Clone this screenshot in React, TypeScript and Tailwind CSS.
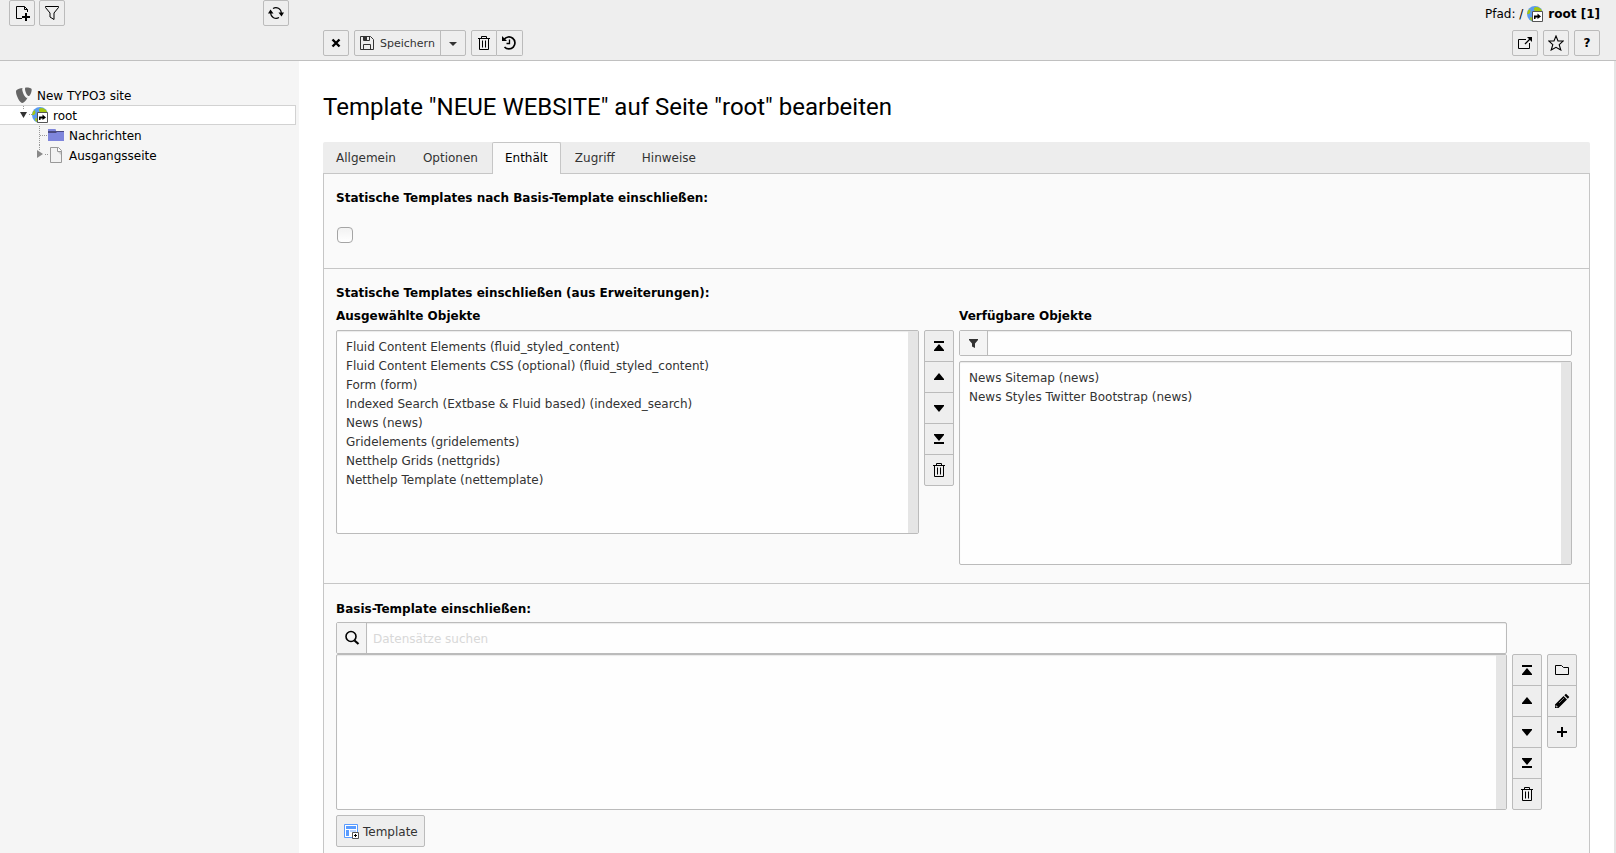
import type { ReactNode } from "react";

const P = ({ d, fill = "currentColor" }: { d: string; fill?: string }) => <path d={d} fill={fill} />;

function Svg({ children }: { children: ReactNode }) {
  return (
    <svg viewBox="0 0 16 16" className="size-4 shrink-0" aria-hidden="true">
      {children}
    </svg>
  );
}

const NewPageIcon = () => (
  <Svg>
    <path d="M8 13.500H2.500V1.500H10.500L13.500 4.500V7M10.500 1.500V4.500H13.500" fill="none" stroke="currentColor" />
    <P d="M11 8h2v3h3v2h-3v3h-2v-3H8v-2h3z" />
  </Svg>
);
const FunnelIcon = () => (
  <Svg>
    <path d="M1.500 1.500H14.500V2.500L10 8V14.500L6 12V8L1.500 2.500Z" fill="none" stroke="currentColor" />
  </Svg>
);
const RefreshIcon = () => (
  <Svg>
    <path d="M5 3.500A5.400 5.400 0 0 1 13.300 8M11 12.500A5.400 5.400 0 0 1 2.700 8" fill="none" stroke="currentColor" strokeWidth="1.100" />
    <P d="M0 8.500l2.500-4L5.500 8.500zM10.500 7.500h5.500L13.500 11.500z" />
  </Svg>
);
const CloseIcon = () => (
  <Svg>
    <path d="M4.500 4.500L11.500 11.500M11.500 4.500L4.500 11.500" stroke="currentColor" strokeWidth="2.400" />
  </Svg>
);
const SaveIcon = () => (
  <Svg>
    <path d="M1.500 1.500H11.500L14.500 4.500V14.500H1.500ZM4.500 1.500V5.500H10.500V1.500M4.500 14.500V9.500H11.500V14.500" fill="none" stroke="currentColor" />
    <P d="M5 2h3v3H5z" />
  </Svg>
);
const CaretIcon = () => (
  <Svg>
    <P d="M4 7h8l-4 4z" />
  </Svg>
);
const TrashIcon = () => (
  <Svg>
    <path d="M2 3.500H14M5.500 3V1.500H10.500V3M3.500 4V14.500H12.500V4M6.500 5.500V12.500M9.500 5.500V12.500" fill="none" stroke="currentColor" />
  </Svg>
);
const HistoryIcon = () => (
  <Svg>
    <path d="M3 4.500A6 6 0 1 1 3.500 12" fill="none" stroke="currentColor" strokeWidth="1.700" />
    <path d="M8.500 4.500V8.500H5.500" fill="none" stroke="currentColor" strokeWidth="1.300" />
    <P d="M1 1v5h5z" />
  </Svg>
);
const OpenIcon = () => (
  <Svg>
    <path d="M9 4.500H1.500V13.500H12.500V8" fill="none" stroke="currentColor" />
    <path d="M8 9L13 4" stroke="currentColor" strokeWidth="1.300" />
    <P d="M10 2h5v5z" />
  </Svg>
);
const StarIcon = () => (
  <Svg>
    <path d="M8 1L10 6H15.300L11.200 9.600L12.800 15L8 12.300L3.200 15L4.800 9.600L.7 6H6Z" fill="none" stroke="currentColor" strokeWidth="1.100" />
  </Svg>
);
const TopIcon = () => (
  <Svg>
    <P d="M3 3h10v2H3zM8 6l5 6v1H3v-1z" />
  </Svg>
);
const UpIcon = () => (
  <Svg>
    <P d="M8 4l5 6v1H3v-1z" />
  </Svg>
);
const DownIcon = () => (
  <Svg>
    <P d="M3 5h10v1l-5 6l-5-6z" />
  </Svg>
);
const BottomIcon = () => (
  <Svg>
    <P d="M3 3h10v1l-5 6l-5-6zM3 11h10v2H3z" />
  </Svg>
);
const FilterIcon = () => (
  <Svg>
    <P d="M3 4h9v1L9 8.500V13L6 11.500V8.500L3 5z" />
  </Svg>
);
const SearchIcon = () => (
  <Svg>
    <circle cx="7" cy="6.500" r="5" fill="none" stroke="currentColor" strokeWidth="1.600" />
    <path d="M10.500 10.500L14.500 14" stroke="currentColor" strokeWidth="2.200" />
  </Svg>
);
const FolderIcon = () => (
  <Svg>
    <path d="M1.500 12.500V3.500H7.500L9.500 5.500H14.500V12.500Z" fill="none" stroke="currentColor" />
  </Svg>
);
const PencilIcon = () => (
  <Svg>
    <P d="M1 15V11.500L9.500 3L13 6.500L4.500 15zM10.300 2.200L12 .7L15.300 4L13.800 5.700z" />
    <path d="M2 12.500L3.500 14H2zM5 10L10 5" fill="#fff" stroke="#999" strokeWidth=".8" />
  </Svg>
);
const PlusIcon = () => (
  <Svg>
    <P d="M7 3h2v4h4v2H9v4H7V9H3V7h4z" />
  </Svg>
);
const GlobeIcon = () => (
  <Svg>
    <circle cx="8" cy="8" r="8" fill="#5b9bee" />
    <P fill="#a5c610" d="M7 2C9 0 13 1 15 4.500L14 6H9L7 4zM0 8L1 4.500L3 3L3.500 6L2 8zM3 11l3 1v3.500L3.500 14z" />
    <path d="M5.500 5.500H15.500V15.500H5.500Z" fill="#fff" stroke="#555" />
    <P fill="#000" d="M7 13V9.500H10.500V7.500L14 10.500L10.500 13V11.500H8.500V13z" />
  </Svg>
);
const TypoIcon = () => (
  <Svg>
    <P fill="#666" d="M11.500 10.800c-.3.100-.5.100-.7.100C8.800 10.900 6.200 4.500 6.200 2.300c0-.8.200-1.100.5-1.300C4.300 1.300 1.400 2.200.4 3.300.2 3.600 0 4.100 0 4.700 0 8.200 3.700 16 6.500 16c1.200 0 3.300-2 5-5.200M10.200.6c2.500 0 5.500.4 5.500 1.900 0 3-1.900 6.600-2.900 6.600-1.700 0-3.800-4.700-3.800-7.100 0-1.100.4-1.400 1.200-1.400" />
  </Svg>
);
const BlueFolderIcon = () => (
  <Svg>
    <P fill="#4b4a80" d="M0 2h7l1 2h8v5H0z" />
    <P fill="#7f86dc" d="M0 2h7l1 1v1H0zM0 6h8l1-1h7v9H0z" />
  </Svg>
);
const PageIcon = () => (
  <Svg>
    <path d="M2.500 .5H10.500L13.500 3.500V15.500H2.500Z" fill="#f2f2f2" stroke="#999" />
    <path d="M9.500 4.500L13 8V4.500Z" fill="#ccc" />
    <path d="M9.500 .5V4.500H13.500" fill="#fff" stroke="#999" />
  </Svg>
);
const TemplateIcon = () => (
  <Svg>
    <path d="M1.500 1.500H14.500V14.500H1.500Z" fill="#fff" stroke="#599bff" />
    <P fill="#599bff" d="M3 3h10v3H3zM3 7h3v6H3z" />
    <P fill="#bcd6ff" d="M7 7h6v2H7z" />
    <path d="M9.500 9.500H15.500V15.500H9.500Z" fill="#fff" stroke="#555" />
    <P fill="#000" d="M12 11h1v1h1v1h-1v1h-1v-1h-1v-1h1z" />
  </Svg>
);

function ToolButton({ label, children, className = "rounded-xs" }: { label: string; children: ReactNode; className?: string }) {
  return (
    <button type="button" aria-label={label} className={`flex size-[26px] items-center justify-center border border-[#bbb] bg-[#eee] ${className}`}>
      {children}
    </button>
  );
}

function ButtonColumn({ items }: { items: [string, ReactNode][] }) {
  return (
    <div className="flex w-[30px] shrink-0 flex-col divide-y divide-[#bbb] rounded-xs border border-[#bbb] bg-[#eee]">
      {items.map(([label, icon]) => (
        <button key={label} type="button" aria-label={label} className="box-content flex h-[30px] items-center justify-center">
          {icon}
        </button>
      ))}
    </div>
  );
}

const moveItems: [string, ReactNode][] = [
  ["An den Anfang", <TopIcon />],
  ["Nach oben", <UpIcon />],
  ["Nach unten", <DownIcon />],
  ["Ans Ende", <BottomIcon />],
  ["Entfernen", <TrashIcon />],
];

function ListBox({ id, options, height, label }: { id: string; options: string[]; height: string; label?: string }) {
  return (
    <div className={`flex rounded-xs border border-[#bbb] bg-[#fefefe] shadow-[inset_0_1px_1px_rgba(0,0,0,0.08)] ${height}`}>
      <select id={id} aria-label={label} multiple className="min-w-0 flex-1 overflow-hidden bg-transparent px-[7px] pt-[9px] text-[#333] outline-none [scrollbar-width:none]">
        {options.map((o) => (
          <option key={o} className="h-[19px] min-h-0 px-[2px] py-0 leading-[19px]">
            {o}
          </option>
        ))}
      </select>
      <div className="w-[10px] bg-[#e5e5e5]" />
    </div>
  );
}

const selected = [
  "Fluid Content Elements (fluid_styled_content)",
  "Fluid Content Elements CSS (optional) (fluid_styled_content)",
  "Form (form)",
  "Indexed Search (Extbase & Fluid based) (indexed_search)",
  "News (news)",
  "Gridelements (gridelements)",
  "Netthelp Grids (nettgrids)",
  "Netthelp Template (nettemplate)",
];
const available = ["News Sitemap (news)", "News Styles Twitter Bootstrap (news)"];
const tabs = ["Allgemein", "Optionen", "Enthält", "Zugriff", "Hinweise"];

function Tree() {
  return (
    <nav aria-label="Seitenbaum" className="w-[299px] shrink-0 bg-[#f5f5f5] pt-6">
      <ul className="text-black">
        <li className="flex h-5 items-center gap-[5px] pl-4">
          <TypoIcon />
          <a href="#site" className="pt-[2px]">New TYPO3 site</a>
        </li>
        <li className="mr-[3px] flex h-5 items-center border-y border-r border-[#d2d2d2] bg-white pl-5">
          <svg viewBox="0 0 12 18" className="h-[18px] w-3 shrink-0" aria-hidden="true">
            <path d="M3.500 0V4M9 8.500H12" stroke="#999" strokeDasharray="1 1" />
            <path d="M0 6H7L3.500 12Z" fill="#333" />
          </svg>
          <GlobeIcon />
          <a href="#root" className="ml-[5px] pt-[2px]">root</a>
        </li>
        <li className="flex h-5 items-center pl-9">
          <svg viewBox="0 0 12 20" className="h-5 w-3 shrink-0" aria-hidden="true">
            <path d="M3.500 1V20M4 10.500H12" stroke="#999" strokeDasharray="1 1" />
          </svg>
          <BlueFolderIcon />
          <a href="#nachrichten" className="ml-[5px] pt-[2px]">Nachrichten</a>
        </li>
        <li className="flex h-5 items-center pl-9">
          <svg viewBox="0 0 12 20" className="h-5 w-3 shrink-0" aria-hidden="true">
            <path d="M3.500 0V5M9 9.500H12" stroke="#999" strokeDasharray="1 1" />
            <path d="M1 5V13L7 9Z" fill="#888" />
          </svg>
          <PageIcon />
          <a href="#ausgangsseite" className="ml-[5px] pt-[2px]">Ausgangsseite</a>
        </li>
      </ul>
    </nav>
  );
}

export default function App() {
  return (
    <div className="flex h-screen flex-col overflow-hidden bg-white font-['DejaVu_Sans',sans-serif] text-[12px] leading-[18px] text-black">
      <header className="flex h-[61px] shrink-0 border-b border-[#c0c0c0] bg-[#eee]">
        <div className="flex w-[299px] shrink-0 items-start gap-1 pr-[10px] pl-[9px]">
          <ToolButton label="Neue Seite"><NewPageIcon /></ToolButton>
          <ToolButton label="Filter"><FunnelIcon /></ToolButton>
          <ToolButton label="Neu laden" className="ml-auto rounded-xs"><RefreshIcon /></ToolButton>
        </div>
        <div className="flex flex-1 flex-col pr-4 pl-6">
          <div className="flex h-[30px] items-center justify-end pb-[2px]">
            <span>Pfad: /</span>
            <span className="mr-[5px] ml-1"><GlobeIcon /></span>
            <strong>root [1]</strong>
          </div>
          <div className="flex gap-[5px]">
            <ToolButton label="Schließen"><CloseIcon /></ToolButton>
            <div className="flex h-[26px] rounded-xs border border-[#bbb] text-[#333]">
              <button type="button" className="flex items-center gap-[5px] pr-[5px] pl-1 text-[11px]">
                <SaveIcon />
                <span className="pt-[2px]">Speichern</span>
              </button>
              <button type="button" aria-label="Weitere Optionen" className="flex w-[25px] items-center justify-center border-l border-[#bbb]">
                <CaretIcon />
              </button>
            </div>
            <div className="flex">
              <ToolButton label="Löschen" className="rounded-l-xs"><TrashIcon /></ToolButton>
              <ToolButton label="Verlauf" className="rounded-r-xs border-l-0"><HistoryIcon /></ToolButton>
            </div>
            <div className="ml-auto flex gap-[5px]">
              <ToolButton label="In neuem Fenster öffnen"><OpenIcon /></ToolButton>
              <ToolButton label="Lesezeichen"><StarIcon /></ToolButton>
              <ToolButton label="Hilfe"><span aria-hidden="true" className="font-bold">?</span></ToolButton>
            </div>
          </div>
        </div>
      </header>

      <div className="flex min-h-0 flex-1">
        <Tree />
        <main className="min-w-0 flex-1 overflow-y-auto border-r-2 border-[#e5e5e5] pt-[29px] pr-6 pl-6 [scrollbar-width:none]">
          <h1 className="mb-[18px] font-['Roboto',sans-serif] text-[24px] leading-[34px]">
            Template "NEUE WEBSITE" auf Seite "root" bearbeiten
          </h1>

          <div role="tablist" className="flex h-8 gap-px rounded-t-xs border-b border-[#c6c6c6] bg-[#ededed]">
            {tabs.map((t) => (
              <button
                key={t}
                type="button"
                role="tab"
                aria-selected={t === "Enthält"}
                className={
                  t === "Enthält"
                    ? "-mb-px rounded-t-xs border border-b-0 border-[#c6c6c6] bg-[#fafafa] px-3 pb-px"
                    : "border border-transparent px-3 text-[#333]"
                }
              >
                {t}
              </button>
            ))}
          </div>

          <div className="border-x border-[#c6c6c6] bg-[#fafafa]">
            <section className="h-[95px] border-b border-[#c6c6c6] px-3 pt-[15px]">
              <label htmlFor="after-base" className="block font-bold">Statische Templates nach Basis-Template einschließen:</label>
              <input
                id="after-base"
                type="checkbox"
                className="mt-[20px] ml-px block size-4 appearance-none rounded-[4px] border border-[#a5a5a5] bg-white bg-linear-to-b from-[#f2f2f2] to-white checked:bg-[#666]"
              />
            </section>

            <section className="border-b border-[#c6c6c6] pt-[15px] pr-[17px] pb-[18px] pl-3">
              <h2 className="mb-[5px] font-bold">Statische Templates einschließen (aus Erweiterungen):</h2>
              <div className="flex items-start gap-[5px]">
                <div className="min-w-0 flex-[583]">
                  <label htmlFor="selected" className="mb-[5px] block font-bold">Ausgewählte Objekte</label>
                  <ListBox id="selected" options={selected} height="h-[204px]" />
                </div>
                <div className="pt-[23px]"><ButtonColumn items={moveItems} /></div>
                <div className="min-w-0 flex-[613]">
                  <label htmlFor="available" className="mb-[5px] block font-bold">Verfügbare Objekte</label>
                  <div className="mb-[5px] flex h-[26px] rounded-xs border border-[#bbb] bg-[#fefefe]">
                    <span className="flex w-7 items-center justify-center border-r border-[#bbb] bg-[#f4f4f4] text-[#333]"><FilterIcon /></span>
                    <input aria-label="Filter" type="text" className="min-w-0 flex-1 bg-transparent px-[6px] shadow-[inset_0_1px_1px_rgba(0,0,0,0.08)] outline-none" />
                  </div>
                  <ListBox id="available" options={available} height="h-[204px]" />
                </div>
              </div>
            </section>

            <section className="px-3 pt-4 pb-8">
              <label htmlFor="record-search" className="mb-1 block font-bold">Basis-Template einschließen:</label>
              <div className="flex items-start gap-[5px]">
                <div className="min-w-0 flex-1">
                  <div className="flex h-8 rounded-xs border border-[#bbb] bg-[#fefefe]">
                    <span className="flex w-[30px] items-center justify-center border-r border-[#bbb] bg-[#f4f4f4]"><SearchIcon /></span>
                    <input
                      id="record-search"
                      type="text"
                      placeholder="Datensätze suchen"
                      className="min-w-0 flex-1 bg-transparent px-[6px] pt-[2px] shadow-[inset_0_1px_1px_rgba(0,0,0,0.08)] outline-none placeholder:text-[#d8d8d8]"
                    />
                  </div>
                  <ListBox id="base" label="Basis-Templates" options={[]} height="h-[156px]" />
                </div>
                <div className="flex items-start gap-[5px] pt-8">
                  <ButtonColumn items={moveItems} />
                  <ButtonColumn items={[["Durchsuchen", <FolderIcon />], ["Bearbeiten", <PencilIcon />], ["Hinzufügen", <PlusIcon />]]} />
                </div>
              </div>
              <button type="button" className="mt-[5px] flex h-8 items-center gap-1 rounded-xs border border-[#bbb] bg-[#eee] px-[6px] text-[#333]">
                <TemplateIcon />
                <span className="pt-[2px]">Template</span>
              </button>
            </section>
          </div>
        </main>
      </div>
    </div>
  );
}
